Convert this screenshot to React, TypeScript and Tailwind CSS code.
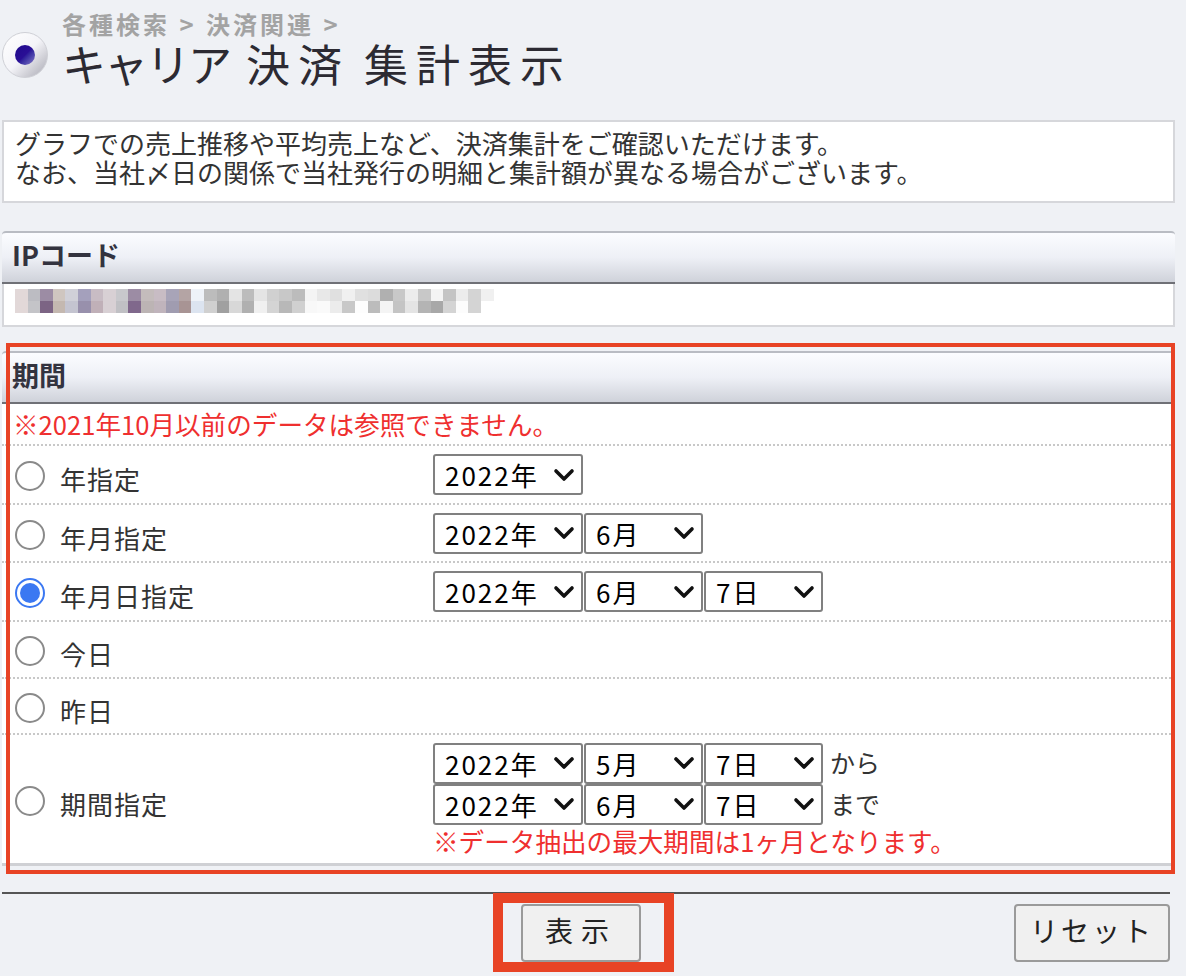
const FONT = "font-['Noto_Sans_CJK_JP','Noto_Sans_CJK_SC',sans-serif]";

const mosaicTop = [
  "#e2d8d8", "#bcbcc2", "#9c8ca4", "#cfc6c0", "#d0d0d8", "#a4a0bc", "#c8bcc4", "#d8d0d4", "#c8c8cc", "#9c8ca4", "#c4bcbc", "#c8bcc4", "#a8a4b8", "#b4a4a4",
  "#eef2f8", "#bcbcbc", "#b0b0b0", "#e4e4e4", "#bcbcbc", "#e4e4e4", "#d0d0d0", "#c8c8c8", "#bcbcbc", "#f4f4f4", "#e8e8e8", "#e0e0e0", "#f0f0f0", "#e0e0e0", "#dcdcdc", "#b0b0b0", "#c8c8c8", "#ececec", "#c8c8c8", "#f4f4f4", "#c4c4c4", "#ececec", "#d4d4d4", "#f0f0f0",
];
const mosaicBottom = [
  "#e2d8d8", "#c4c4c8", "#7c6484", "#c4b8b0", "#c4c4d0", "#9890ac", "#c0b0b8", "#d8d0d4", "#c0c0c4", "#80688c", "#bcb4b4", "#c0b4bc", "#a09cb0", "#a89494",
  "#dce4f0", "#d0d0d0", "#a0a0a0", "#d8d8d8", "#b0b0b0", "#f0f0f0", "#d4d4d4", "#b8b8b8", "#d0d0d0", "#f8f8f8", "#fafafa", "#ececec", "#c8c8c8", "#fdfdfd", "#bcbcbc", "#f4f4f4", "#c4c4c4", "#e4e4e4", "#b4b4b4", "#a8a8a8", "#d4d4d4", "#fcfcfc", "#d4d4d4", "#ffffff",
];

function Radio({ checked = false }: { checked?: boolean }) {
  if (checked) {
    return (
      <span className="mt-[3px] flex h-[30px] w-[30px] shrink-0 items-center justify-center rounded-full border-2 border-[#3b78f2] bg-white">
        <span className="h-[20px] w-[20px] rounded-full bg-[#3b78f2]" />
      </span>
    );
  }
  return <span className="mt-[3px] h-[30px] w-[30px] shrink-0 rounded-full border-2 border-[#8a8a8a] bg-white" />;
}

function Select({ value, width }: { value: string; width: string }) {
  return (
    <div className={`flex h-[41px] shrink-0 items-center justify-between rounded-[3px] border-2 border-[#808080] bg-white pl-[10px] pr-[6px] text-[26px] text-black ${width}`}>
      <span className="tracking-[2px]">{value}</span>
      <svg width="22" height="14" viewBox="0 0 22 14" fill="none" className="shrink-0">
        <path d="M3 3 L11 11 L19 3" stroke="#111" strokeWidth="3.6" strokeLinecap="round" strokeLinejoin="round" />
      </svg>
    </div>
  );
}

function DateSelects({ y, m, d }: { y: string; m?: string; d?: string }) {
  return (
    <div className="flex gap-[1px]">
      <Select value={y} width="w-[150px]" />
      {m && <Select value={m} width="w-[119px]" />}
      {d && <Select value={d} width="w-[119px]" />}
    </div>
  );
}

function PanelHeader({ title }: { title: string }) {
  return (
    <div className="flex h-[53px] items-center rounded-t-[4px] border-t-2 border-b-2 border-t-[#b9bcc3] border-b-[#6f7076] bg-gradient-to-b from-[#fbfcff] via-[#eef0f6] to-[#cfd2da] pb-[5px] pl-[10px] text-[27px] font-bold text-[#33333f]">
      {title}
    </div>
  );
}

function Row({ label, checked, height, children }: { label: string; checked?: boolean; height: string; children?: React.ReactNode }) {
  return (
    <div className={`flex items-center border-b-2 border-dotted border-[#c8c8c8] last:border-b-0 ${height}`}>
      <div className="flex w-[431px] shrink-0 items-center pl-[13px]">
        <Radio checked={checked} />
        <span className="ml-[15px] mt-[8px] text-[26px] tracking-[1px] text-[#333]">{label}</span>
      </div>
      {children}
    </div>
  );
}

export default function App() {
  return (
    <div className={`relative h-[976px] w-[1186px] overflow-hidden bg-[#eff1f5] ${FONT}`}>
      {/* title */}
      <div className="flex h-[120px] items-start pl-[2px] pt-[11px]">
        <div className="mt-[21px] flex h-[46px] w-[46px] shrink-0 items-center justify-center rounded-full border border-[#cfd0d6] bg-gradient-to-br from-white via-[#f4f4f8] to-[#a9a9b3]">
          <span className="h-[20px] w-[20px] rounded-full bg-gradient-to-br from-[#1f0a8c] via-[#2a0f96] to-[#8a78c8]" />
        </div>
        <div className="ml-[14px]">
          <div className="h-[26px] whitespace-nowrap text-[24px] font-bold leading-[26px] tracking-[3px] text-[#a3a3a3] [word-spacing:1px]">各種検索 &gt; 決済関連 &gt;</div>
          <div className="flex whitespace-nowrap text-[44px] leading-[52px] text-[#2c2a32]">
            <span className="tracking-[-2px]">キャリア</span>
            <span className="ml-[16px] tracking-[8px]">決済</span>
            <span className="ml-[14px] tracking-[8px]">集計表示</span>
          </div>
        </div>
      </div>

      {/* description */}
      <div className="ml-[2px] flex h-[83px] w-[1173px] flex-col justify-center border-2 border-[#d6d7db] bg-white pb-[9px] pl-[11px] text-[26px] leading-[29px] text-[#333]">
        <div className="h-[29px] whitespace-nowrap">グラフでの売上推移や平均売上など、決済集計をご確認いただけます。</div>
        <div className="h-[29px] whitespace-nowrap">なお、当社〆日の関係で当社発行の明細と集計額が異なる場合がございます。</div>
      </div>

      {/* IP code */}
      <div className="ml-[2px] mt-[28px] w-[1173px]">
        <PanelHeader title="IPコード" />
        <div className="flex h-[43px] flex-col border-2 border-t-0 border-[#d6d7db] bg-white pl-[11px] pt-[5px]">
          <div className="flex">
            {mosaicTop.map((c, i) => (
              <span key={i} className="h-[12px] w-[12.6px]" style={{ backgroundColor: c }} />
            ))}
          </div>
          <div className="flex">
            {mosaicBottom.map((c, i) => (
              <span key={i} className="h-[12px] w-[12.6px]" style={{ backgroundColor: c }} />
            ))}
          </div>
        </div>
      </div>

      {/* period */}
      <div className="ml-[2px] mt-[24px] w-[1173px]">
        <PanelHeader title="期間" />
        <div className="flex h-[42px] items-center whitespace-nowrap border-b-2 border-dotted border-[#c8c8c8] bg-white pl-[11px] text-[25.6px] text-[#ef2f2f]">
          ※2021年10月以前のデータは参照できません。
        </div>
        <div className="bg-white">
          <Row label="年指定" height="h-[59px]">
            <DateSelects y="2022年" />
          </Row>
          <Row label="年月指定" height="h-[58px]">
            <DateSelects y="2022年" m="6月" />
          </Row>
          <Row label="年月日指定" checked height="h-[59px]">
            <DateSelects y="2022年" m="6月" d="7日" />
          </Row>
          <Row label="今日" height="h-[57px]" />
          <Row label="昨日" height="h-[56px]" />
          <Row label="期間指定" height="h-[128px]">
            <div className="flex flex-col">
              <div className="flex items-center">
                <DateSelects y="2022年" m="5月" d="7日" />
                <span className="ml-[7px] text-[25px] text-[#333]">から</span>
              </div>
              <div className="flex items-center">
                <DateSelects y="2022年" m="6月" d="7日" />
                <span className="ml-[7px] text-[25px] text-[#333]">まで</span>
              </div>
              <div className="mt-[1px] whitespace-nowrap text-[25.6px] leading-[30px] text-[#ef2f2f]">※データ抽出の最大期間は1ヶ月となります。</div>
            </div>
          </Row>
        </div>
        <div className="h-[3px] bg-[#cfd0d4]" />
        <div className="h-[8px] bg-[#eff1f5]" />
      </div>

      {/* footer */}
      <div className="ml-[2px] mt-[18px] h-[2px] w-[1168px] bg-[#555]" />
      <div className="relative mt-[10px] h-[58px] w-[1170px]">
        <div className="flex justify-end">
          <button className="h-[58px] w-[156px] rounded-[4px] border-2 border-[#9a9a9a] bg-[#f0f0f0] pb-[6px] text-[28px] tracking-[3px] text-[#222]">リセット</button>
        </div>
        <button className="absolute left-[521px] top-0 h-[58px] w-[120px] rounded-[4px] border-2 border-[#9a9a9a] bg-[#f0f0f0] pb-[6px] text-[28px] tracking-[8px] text-[#222]">表示</button>
      </div>

      {/* red callouts */}
      <div className="absolute left-[6px] top-[343px] h-[531px] w-[1169px] border-[4px] border-[#e84325]" />
      <div className="absolute left-[493px] top-[893px] h-[79px] w-[181px] border-[10px] border-[#e84325]" />
    </div>
  );
}
